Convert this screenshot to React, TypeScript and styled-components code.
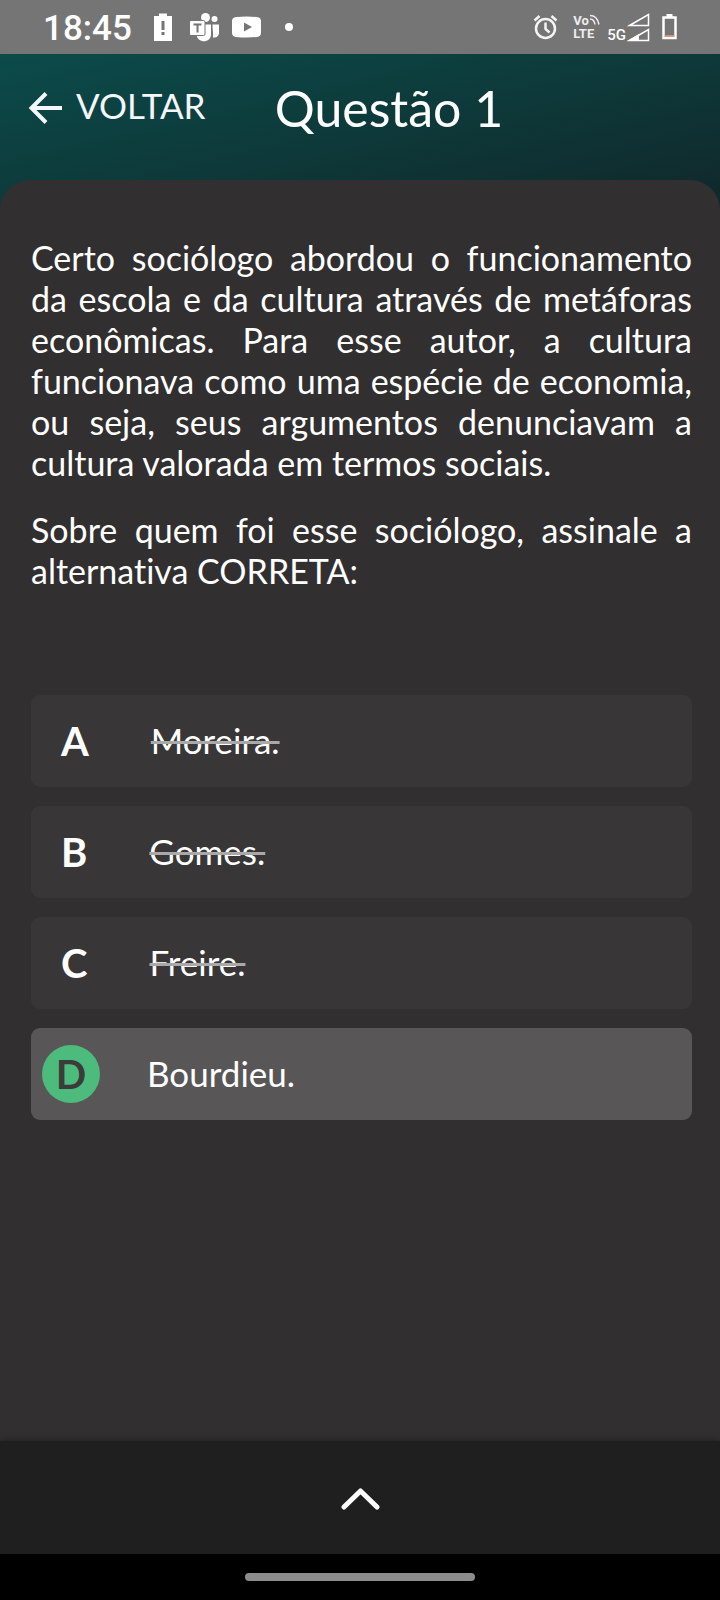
import { useState } from "react";
import styled, { createGlobalStyle } from "styled-components";

const GlobalStyle = createGlobalStyle`
  *, *::before, *::after { box-sizing: border-box; }
  body { margin: 0; background: #000; }
  button { font: inherit; color: inherit; border: 0; background: none; padding: 0; cursor: pointer; }
`;

const Screen = styled.div`
  min-height: 100vh;
  display: flex;
  flex-direction: column;
  font-family: Lato, "Noto Sans", sans-serif;
  font-variant-ligatures: none;
  color: #fff;
`;

const StatusBar = styled.div`
  height: 54px;
  flex: none;
  display: flex;
  align-items: center;
  justify-content: space-between;
  padding: 0 42px 0 43px;
  background: #757575;
  font-family: Roboto, sans-serif;
`;

const StatusGroup = styled.div`
  display: flex;
  align-items: center;
`;

const Clock = styled.time`
  font-size: 35px;
  line-height: 51px;
  font-weight: 500;
  padding-top: 3px;
  margin-right: 8px;
`;

const Main = styled.div`
  flex: 1;
  display: flex;
  flex-direction: column;
  background: linear-gradient(167deg, #0b4b4a 0, #10292b 300px);
`;

const Header = styled.header`
  height: 126px;
  display: grid;
  grid-template-columns: 1fr auto 1fr;
  align-items: start;
  padding: 24px 28px 0;
`;

const BackButton = styled.button`
  justify-self: start;
  height: 60px;
  display: flex;
  align-items: center;
  gap: 14px;
  font-size: 35px;
  line-height: 42px;
  color: #f4f6fa;
`;

const BackLabel = styled.span`
  padding-bottom: 6px;
`;

const Title = styled.h1`
  margin: 0;
  padding-left: 58px;
  font-size: 50px;
  font-weight: 400;
  line-height: 60px;
`;

const Card = styled.main`
  flex: 1;
  background: #322f30;
  border-radius: 30px 30px 0 0;
  padding: 57px 28px 57px 31px;
`;

const Statement = styled.p`
  margin: 0 0 26px;
  font-size: 34px;
  line-height: 41px;
  text-align: justify;
`;

const Options = styled.div`
  display: flex;
  flex-direction: column;
  gap: 19px;
  margin-top: 104px;
`;

const Option = styled.button<{ $selected: boolean }>`
  height: 92px;
  display: flex;
  align-items: center;
  gap: ${(p) => (p.$selected ? 47 : 62)}px;
  padding: 0 ${(p) => (p.$selected ? 11 : 30)}px;
  border-radius: 9px;
  background: ${(p) => (p.$selected ? "#585657" : "#383637")};
  text-align: left;
`;

const Letter = styled.span<{ $selected: boolean }>`
  font-size: 40px;
  line-height: 58px;
  font-weight: 700;
  text-align: center;
  ${(p) => p.$selected && "width: 58px; border-radius: 50%; background: #4dbb7c; color: #3b3b3b;"}
`;

const Answer = styled.span<{ $discarded: boolean }>`
  font-size: 35px;
  line-height: 42px;
  padding-bottom: 2px;
  text-decoration: ${(p) => (p.$discarded ? "line-through 3px #a9a9a9" : "none")};
`;

const Drawer = styled.button`
  height: 113px;
  flex: none;
  display: flex;
  align-items: center;
  justify-content: center;
  padding-top: 2px;
  background: #1f1f1f;
  box-shadow: 0 0 8px rgba(0, 0, 0, 0.4);
`;

const GestureArea = styled.div`
  height: 46px;
  flex: none;
  position: relative;
  display: flex;
  align-items: center;
  justify-content: center;
  background: #000;
`;

const GesturePill = styled.div`
  width: 32%;
  height: 8px;
  border-radius: 4px;
  background: #8c8c8c;
`;

const BatteryAlertIcon = () => (
  <svg width="46" height="54" viewBox="140 0 46 54" aria-hidden="true">
    <path d="M154 16h5v-2.500h8v2.500h5v25h-18z" fill="#fff" />
    <path d="M161.500 21h3v9h-3zM161.500 32h3v3h-3z" fill="#757575" />
  </svg>
);

const TeamsIcon = () => (
  <svg width="40" height="54" viewBox="186 0 40 54" aria-hidden="true">
    <g fill="#fff">
      <circle cx="205.500" cy="17.500" r="4.500" />
      <circle cx="214.500" cy="19" r="3" />
      <path d="M200 24.500h11v10c0 9-14 9-14.500 0z" />
      <path d="M212.500 24.500h6.500v8c0 4-3 5.500-6 5 .5-2-.5-9-.5-13z" />
    </g>
    <rect x="189.500" y="20.500" width="15.500" height="15" rx="1.500" fill="#fff" stroke="#757575" />
    <path d="M193.500 24.500h8M197.500 24.500v8" stroke="#757575" strokeWidth="2" fill="none" />
  </svg>
);

const YoutubeIcon = () => (
  <svg width="48" height="54" viewBox="226 0 48 54" aria-hidden="true">
    <path d="M236 17q10.500-1 21 0 4 .5 4 4v12q0 3.500-4 4-10.500 1-21 0-4-.5-4-4V21q0-3.500 4-4z" fill="#fff" />
    <path d="M244 22.500l8 4.500-8 4.500z" fill="#757575" />
  </svg>
);

const DotIcon = () => (
  <svg width="24" height="54" viewBox="274 0 24 54" aria-hidden="true">
    <circle cx="289" cy="27" r="4" fill="#fff" />
  </svg>
);

const AlarmIcon = () => (
  <svg width="34" height="54" viewBox="530 0 34 54" fill="none" stroke="#f4f4f4" aria-hidden="true">
    <circle cx="545.500" cy="28.500" r="9.500" strokeWidth="2.500" />
    <path d="M545.500 22.500v6.500l4 3.500" strokeWidth="2.500" />
    <path d="M534.500 20.500l5-4.500M556.500 20.500l-5-4.500" strokeWidth="2.500" />
  </svg>
);

const VolteLabel = styled.span`
  width: 43px;
  display: grid;
  padding-left: 9px;
  font-size: 13px;
  line-height: 13px;
  font-weight: 700;
  color: #ededed;
`;

const VolteTop = styled.span`
  display: flex;
`;

const NetworkLabel = styled.span`
  align-self: flex-end;
  padding-bottom: 10px;
  font-size: 15px;
  line-height: 18px;
  font-weight: 500;
`;

const WaveIcon = () => (
  <svg width="12" height="12" viewBox="0 0 12 12" fill="none" stroke="#ededed" strokeWidth="1.500" aria-hidden="true">
    <path d="M1 1.500c5 0 8 4 9 9M1 5c3 0 4.500 2.500 5 5.500" />
  </svg>
);

const SignalIcon = () => (
  <svg width="24" height="54" viewBox="626 0 24 54" fill="none" stroke="#fff" strokeWidth="1.500" aria-hidden="true">
    <path d="M629.500 25.500L648.500 14.500V25.500z" />
    <path d="M629.500 40.500L648.500 29.500V40.500z" />
    <path d="M627 41L639 34V41z" fill="#fff" stroke="none" />
  </svg>
);

const BatteryIcon = () => (
  <svg width="28" height="54" viewBox="650 0 28 54" fill="none" aria-hidden="true">
    <path d="M663.500 17.500h12v20.500h-12z" stroke="#fff" strokeWidth="2.500" />
    <path d="M666.500 14h6v3h-6z" fill="#fff" />
    <path d="M664.500 36h10" stroke="#f09a80" strokeWidth="1.500" />
  </svg>
);

const ArrowLeftIcon = () => (
  <svg width="34" height="34" viewBox="0 0 34 34" fill="none" stroke="currentColor" strokeWidth="4" aria-hidden="true">
    <path d="M34 17H4M18 2.500L3.500 17 18 31.500" />
  </svg>
);

const ChevronUpIcon = () => (
  <svg width="40" height="24" viewBox="0 0 40 24" fill="none" stroke="#fff" strokeWidth="5" strokeLinecap="round" strokeLinejoin="round" aria-hidden="true">
    <path d="M4 20L20.500 4 37 20" />
  </svg>
);

const alternatives = [
  { letter: "A", text: "Moreira.", discarded: true },
  { letter: "B", text: "Gomes.", discarded: true },
  { letter: "C", text: "Freire.", discarded: true },
  { letter: "D", text: "Bourdieu.", discarded: false },
];

export default function App() {
  const [selected, setSelected] = useState("D");
  return (
    <Screen lang="pt-BR">
      <GlobalStyle />
      <StatusBar>
        <StatusGroup>
          <Clock>18:45</Clock>
          <BatteryAlertIcon />
          <TeamsIcon />
          <YoutubeIcon />
          <DotIcon />
        </StatusGroup>
        <StatusGroup>
          <AlarmIcon />
          <VolteLabel>
            <VolteTop>
              Vo
              <WaveIcon />
            </VolteTop>
            <span>LTE</span>
          </VolteLabel>
          <NetworkLabel>5G</NetworkLabel>
          <SignalIcon />
          <BatteryIcon />
        </StatusGroup>
      </StatusBar>
      <Main>
        <Header>
          <BackButton type="button">
            <ArrowLeftIcon />
            <BackLabel>VOLTAR</BackLabel>
          </BackButton>
          <Title>Questão 1</Title>
        </Header>
        <Card>
          <Statement>
            Certo sociólogo abordou o funcionamento da escola e da cultura através de metáforas econômicas. Para esse
            autor, a cultura funcionava como uma espécie de economia, ou seja, seus argumentos denunciavam a cultura
            valorada em termos sociais.
          </Statement>
          <Statement>Sobre quem foi esse sociólogo, assinale a alternativa CORRETA:</Statement>
          <Options>
            {alternatives.map(({ letter, text, discarded }) => (
              <Option
                key={letter}
                type="button"
                $selected={selected === letter}
                aria-pressed={selected === letter}
                onClick={() => setSelected(letter)}
              >
                <Letter $selected={selected === letter}>{letter}</Letter>
                <Answer $discarded={discarded}>{text}</Answer>
              </Option>
            ))}
          </Options>
        </Card>
      </Main>
      <Drawer type="button" aria-label="Abrir painel">
        <ChevronUpIcon />
      </Drawer>
      <GestureArea>
        <GesturePill />
      </GestureArea>
    </Screen>
  );
}
